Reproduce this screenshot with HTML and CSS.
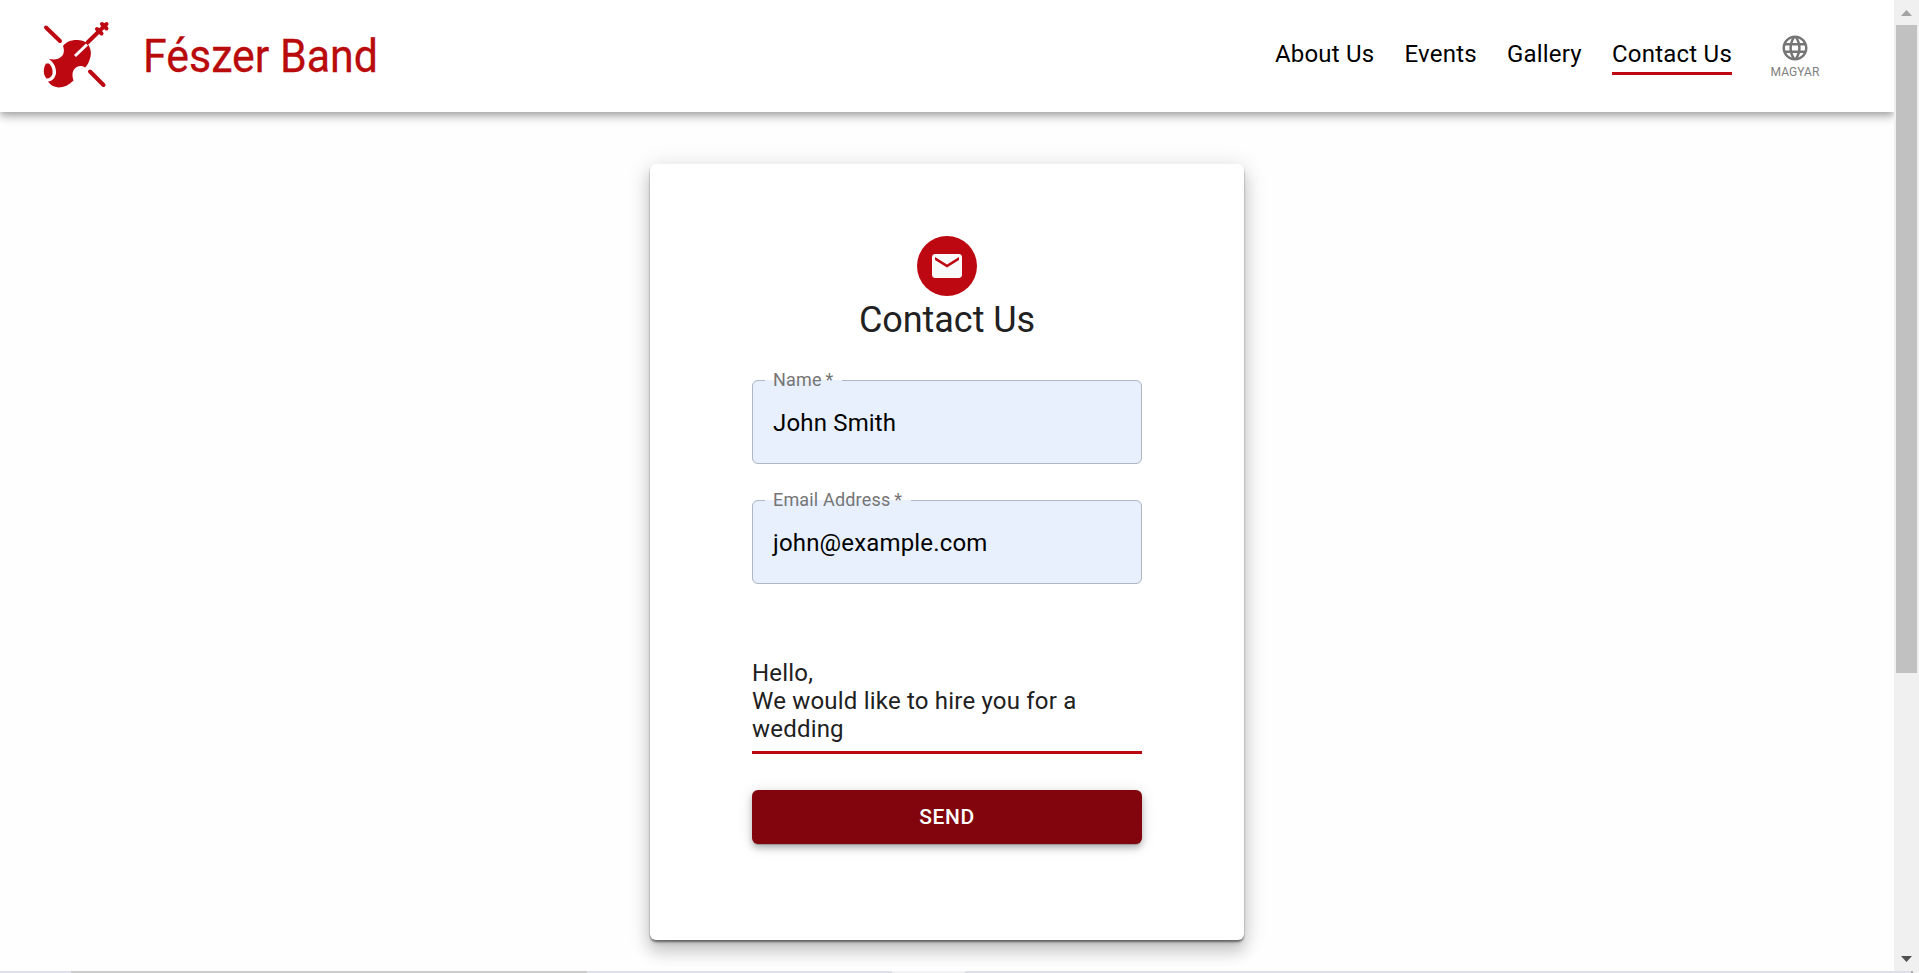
FILE: index.html
```html
<!DOCTYPE html>
<html lang="en">
<head>
<meta charset="utf-8">
<title>Fészer Band</title>
<link rel="stylesheet" href="styles.css">
</head>
<body>
<div class="window">
  <div class="page">
    <header class="header">
      <a class="brand">
        <svg class="violin" width="68" height="68" viewBox="0 0 68 68">
          <g stroke="#bd0812" stroke-width="4" stroke-linecap="round" fill="none">
            <path d="M4 7.500L18 21M48 51.500L61.500 65"/>
            <path d="M45.500 22.500L64.500 4"/>
            <path d="M55 9L59.500 13.500M60 4L64.500 8.500"/>
          </g>
          <path fill="#bd0812" d="M21 26C24 22 29 20 34 20C39 20 44 21 46.500 25C49.500 30 49.500 35 47.500 40C46.500 43 45 46 43 47.500C39 45 35 46 33 48.500C30 51 30 56 31.500 60.500C27 65 22 67.500 16.500 67.500C12 67 8 65 6 61.500C10.500 61 13 58 14 53.500C14.500 48 12 42.500 7 39C12 40 17 39.500 20 36C22 34 22.500 30 21 26Z"/>
          <path fill="#bd0812" d="M4 43.500H7C10 46 11 50 10.500 54C9.500 57 7 59 4.500 58.500C1 55 1 48 4 43.500Z"/>
          <path stroke="#fff" stroke-width="3" d="M45 24.500L33 36"/>
        </svg>
        <svg class="wordmark" width="260" height="68" viewBox="0 0 260 68"><text x="3" y="52" textLength="235" lengthAdjust="spacingAndGlyphs">Fészer Band</text></svg>
      </a>
      <nav class="nav">
        <a>About Us</a>
        <a>Events</a>
        <a>Gallery</a>
        <a class="active">Contact Us</a>
      </nav>
      <button class="language">
        <svg width="30" height="30" viewBox="0 0 24 24"><path fill="#757575" d="M11.990 2C6.470 2 2 6.480 2 12s4.470 10 9.990 10C17.520 22 22 17.520 22 12S17.520 2 11.990 2zm6.930 6h-2.950c-.32-1.250-.78-2.450-1.380-3.560 1.840.63 3.370 1.910 4.330 3.560zM12 4.040c.83 1.200 1.480 2.530 1.910 3.960h-3.820c.43-1.430 1.080-2.760 1.910-3.960zM4.260 14C4.100 13.360 4 12.690 4 12s.1-1.360.26-2h3.380c-.08.66-.14 1.320-.14 2 0 .68.06 1.340.14 2H4.260zm.82 2h2.950c.32 1.250.78 2.450 1.380 3.560-1.840-.63-3.370-1.900-4.330-3.560zm2.950-8H5.080c.96-1.660 2.490-2.930 4.330-3.560C8.810 5.550 8.350 6.750 8.030 8zM12 19.960c-.83-1.200-1.480-2.530-1.910-3.960h3.820c-.43 1.430-1.080 2.760-1.910 3.960zM14.340 14H9.660c-.09-.66-.16-1.320-.16-2 0-.68.07-1.350.16-2h4.680c.09.650.16 1.320.16 2 0 .68-.07 1.340-.16 2zm.25 5.560c.6-1.110 1.060-2.310 1.380-3.560h2.950c-.96 1.650-2.490 2.930-4.330 3.560zM16.360 14c.08-.66.14-1.320.14-2 0-.68-.06-1.340-.14-2h3.380c.16.640.26 1.310.26 2s-.1 1.360-.26 2h-3.380z"/></svg>
        <span>MAGYAR</span>
      </button>
    </header>
    <main class="card">
      <div class="avatar">
        <svg width="36" height="36" viewBox="0 0 24 24"><path fill="#fafafa" d="M20 4H4c-1.100 0-1.990.9-1.990 2L2 18c0 1.100.9 2 2 2h16c1.100 0 2-.9 2-2V6c0-1.100-.9-2-2-2zm0 4l-8 5-8-5V6l8 5 8-5v2z"/></svg>
      </div>
      <h1>Contact Us</h1>
      <div class="fields">
        <fieldset class="field"><legend>Name&thinsp;*</legend><div class="value">John Smith</div></fieldset>
        <fieldset class="field"><legend>Email Address&thinsp;*</legend><div class="value">john@example.com</div></fieldset>
      </div>
      <div class="message">Hello,<br>We would like to hire you for a wedding</div>
      <button class="send">SEND</button>
    </main>
  </div>
  <div class="scrollbar">
    <svg width="25" height="25" viewBox="0 0 25 25"><path fill="#a3a3a3" d="M7 16H18L12.500 10Z"/></svg>
    <div class="thumb"></div>
    <svg class="down" width="25" height="25" viewBox="0 0 25 25"><path fill="#505050" d="M7 10H18L12.500 16Z"/></svg>
  </div>
</div>
<div class="strip"><i class="track-start"></i><i class="track-thumb"></i><i class="track-mid"></i><i class="track-gap"></i><i class="track-end"></i><i class="track-mark"></i></div>
</body>
</html>
```
FILE: styles.css
```css
* { box-sizing: border-box; }
body {
  margin: 0;
  height: 973px;
  overflow: hidden;
  display: flex;
  flex-direction: column;
  background: #fefefe;
  font-family: Roboto, "Liberation Sans", sans-serif;
  color: #212121;
}
button { border: 0; padding: 0; background: none; font-family: inherit; }
.window { display: flex; height: 971px; }
.page { width: 1894px; overflow: hidden; }
.header {
  height: 112px;
  display: flex;
  background: #fff;
  box-shadow: 0 3px 6px -1px rgba(0,0,0,.2), 0 6px 8px rgba(0,0,0,.14), 0 1px 14px rgba(0,0,0,.12);
}
.brand { display: flex; padding: 20px 0 0 42px; }
.wordmark { margin-left: 30px; overflow: visible; }
.wordmark text { font-size: 47px; fill: #b90a0c; stroke: #b90a0c; stroke-width: .3px; }
.nav {
  display: flex;
  gap: 30px;
  margin-left: auto;
  padding-top: 38px;
  font-size: 24px;
  line-height: 32px;
  letter-spacing: .225px;
  color: #000;
}
.nav a { height: 37px; white-space: nowrap; }
.nav .active { border-bottom: 3px solid #bd0812; }
.language {
  display: flex;
  flex-direction: column;
  align-items: center;
  width: 50px;
  margin: 33px 74px 0 38px;
  font-size: 12px;
  line-height: 14px;
  letter-spacing: .1px;
  color: #808080;
}
.language span { margin-top: 2px; }
.card {
  width: 594px;
  height: 776px;
  margin: 52px 0 0 650px;
  padding: 72px 102px 0;
  border-radius: 6px;
  background: #fff;
  box-shadow: 0 5px 5px -3px rgba(0,0,0,.2), 0 12px 15px 1px rgba(0,0,0,.14), 0 4px 21px 3px rgba(0,0,0,.12), 0 2px 2px rgba(0,0,0,.4);
}
.avatar {
  width: 60px;
  height: 60px;
  margin: 0 auto;
  display: grid;
  place-items: center;
  border-radius: 50%;
  background: #bd0812;
}
h1 { margin: 0; text-align: center; font-size: 36px; font-weight: 400; line-height: 48px; letter-spacing: -.05px; }
.fields { display: grid; gap: 26px; margin-top: 26px; }
.field {
  height: 94px;
  margin: 0;
  padding: 0 20px;
  border: 1px solid #aeb5c3;
  border-radius: 6px;
  background: #e8f0fe;
  min-width: 0;
}
.field legend {
  height: 20px;
  margin-left: -8px;
  padding: 0 9px 0 8px;
  font-size: 18px;
  line-height: 20px;
  letter-spacing: .17px;
  color: #757575;
}
.value { padding-top: 19px; font-size: 24px; line-height: 28px; color: #000; letter-spacing: .17px; }
.message {
  height: 99px;
  margin-top: 71px;
  padding-top: 4px;
  border-bottom: 3px solid #bd0812;
  font-size: 24px;
  line-height: 28px;
  letter-spacing: .2px;
}
.send {
  display: block;
  width: 390px;
  height: 54px;
  margin-top: 36px;
  border-radius: 6px;
  background: #82050d;
  color: #fff;
  font-size: 21px;
  font-weight: 500;
  letter-spacing: .55px;
  box-shadow: 0 3px 1px -2px rgba(0,0,0,.2), 0 4px 6px rgba(0,0,0,.24), 0 2px 16px rgba(0,0,0,.12);
}
.scrollbar { width: 25px; background: #f0f0f0; display: flex; flex-direction: column; }
.thumb { width: 21px; height: 648px; margin-left: 2px; background: #c1c1c1; }
.scrollbar .down { margin-top: auto; }
.strip { display: flex; height: 2px; background: #f0f0f0; }
.track-start { width: 71px; background: #dee1ea; }
.track-thumb { width: 516px; background: #cbcbcb; }
.track-mid { width: 305px; background: #dee1ea; }
.track-gap { width: 73px; background: #f3f3f5; }
.track-end { width: 946px; background: #dcdfe6; }
.track-mark { width: 2px; background: #ababab; }
```
